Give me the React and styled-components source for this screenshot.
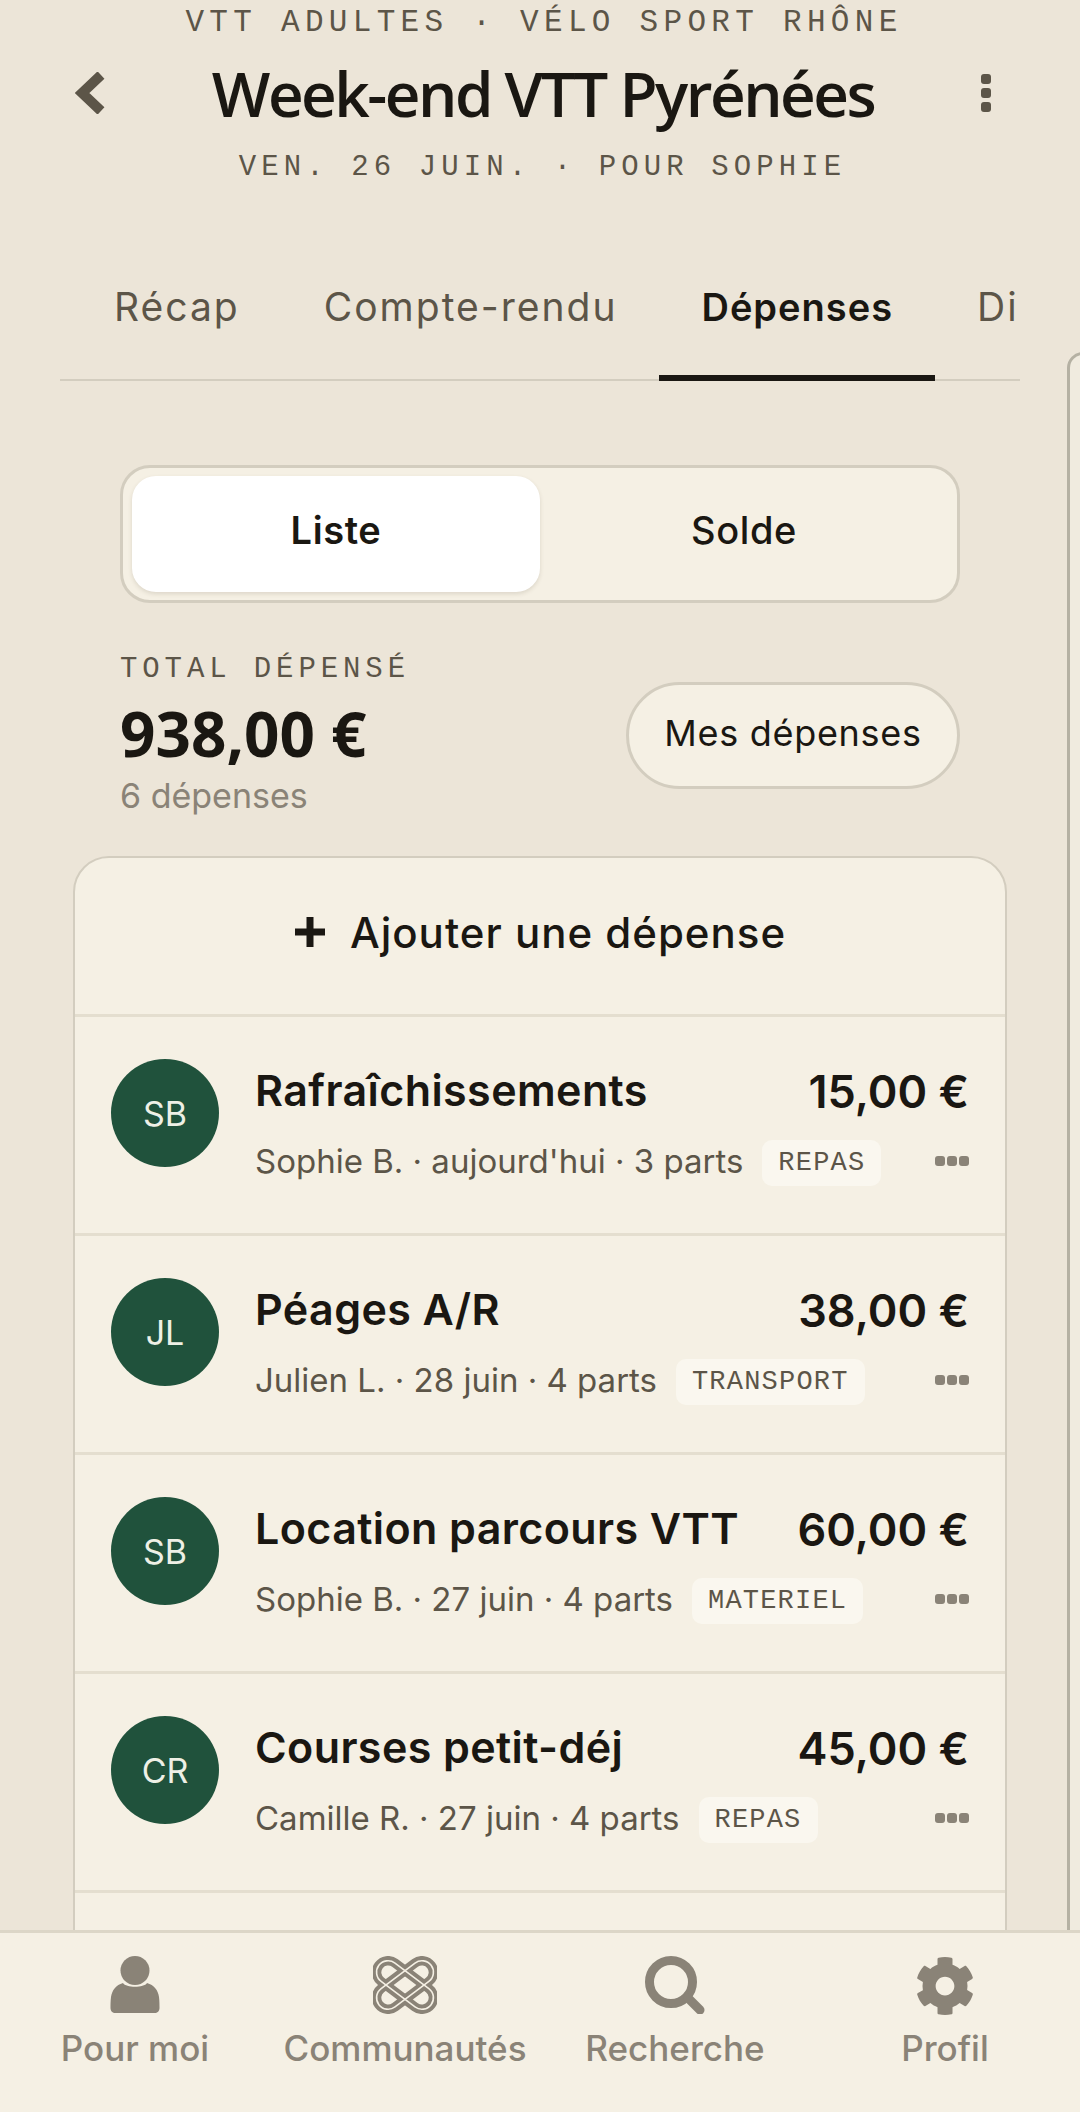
import React from 'react'
import styled, { createGlobalStyle } from 'styled-components'
import { FaCog } from 'react-icons/fa'

const GlobalStyle = createGlobalStyle`
	html, body {
		margin: 0;
		padding: 0;
		background: #ece5d8;
	}
`

const expenses = [
	{ initials: 'SB', title: 'Rafraîchissements', amount: '15,00 €', meta: "Sophie B. · aujourd'hui · 3 parts", tag: 'REPAS' },
	{ initials: 'JL', title: 'Péages A/R', amount: '38,00 €', meta: 'Julien L. · 28 juin · 4 parts', tag: 'TRANSPORT' },
	{ initials: 'SB', title: 'Location parcours VTT', amount: '60,00 €', meta: 'Sophie B. · 27 juin · 4 parts', tag: 'MATERIEL' },
	{ initials: 'CR', title: 'Courses petit-déj', amount: '45,00 €', meta: 'Camille R. · 27 juin · 4 parts', tag: 'REPAS' },
]

const PersonIcon = () => (
	<NavSvg viewBox="0 0 64 58">
		<circle cx="32" cy="14.500" r="14.500" />
		<path d="M20 27c3 5 21 5 24 0 7 2 11 7 12 14 .5 4 .5 8 .5 11 0 3-2 5-5 5H12.500c-3 0-5-2-5-5 0-3 0-7 .5-11 1-7 5-12 12-14z" />
	</NavSvg>
)

const KnotIcon = () => (
	<NavSvg viewBox="0 0 64 58">
		<g fill="none" stroke="#8a8377" strokeWidth="9.500">
			<rect x="-0.7" y="17.500" width="65.4" height="23" rx="11.500" transform="rotate(37 32 29)" />
			<rect x="-0.7" y="17.500" width="65.4" height="23" rx="11.500" transform="rotate(-37 32 29)" />
		</g>
		<g fill="none" stroke="#f5f0e4" strokeWidth="1.600">
			<rect x="-0.7" y="17.500" width="65.4" height="23" rx="11.500" transform="rotate(37 32 29)" />
			<rect x="-0.7" y="17.500" width="65.4" height="23" rx="11.500" transform="rotate(-37 32 29)" />
		</g>
	</NavSvg>
)

const SearchIcon = () => (
	<NavSvg viewBox="0 0 64 58">
		<circle cx="28" cy="26" r="21.500" fill="none" stroke="#8a8377" strokeWidth="9" />
		<path d="M45 42l12 12" fill="none" stroke="#8a8377" strokeWidth="9" strokeLinecap="round" />
	</NavSvg>
)

const App = () => (
	<Page>
		<GlobalStyle />
		<Header>
			<Overline>VTT ADULTES · VÉLO SPORT RHÔNE</Overline>
			<TitleRow>
				<BackIcon viewBox="0 0 30 42">
					<path d="M26 3L7 21l19 18" fill="none" stroke="#5c5548" strokeWidth="10" />
				</BackIcon>
				<Title>Week-end VTT Pyrénées</Title>
				<Kebab>
					<Dot />
					<Dot />
					<Dot />
				</Kebab>
			</TitleRow>
			<Subtitle>VEN. 26 JUIN. · POUR SOPHIE</Subtitle>
		</Header>

		<Tabs>
			<Tab>Récap</Tab>
			<Tab>Compte-rendu</Tab>
			<Tab $active>Dépenses</Tab>
			<Tab>Discussion</Tab>
		</Tabs>

		<Segmented>
			<Segment $active>Liste</Segment>
			<Segment>Solde</Segment>
		</Segmented>

		<Summary>
			<div>
				<TotalLabel>TOTAL DÉPENSÉ</TotalLabel>
				<TotalAmount>938,00 €</TotalAmount>
				<TotalCount>6 dépenses</TotalCount>
			</div>
			<MineButton>Mes dépenses</MineButton>
		</Summary>

		<Card>
			<AddRow>
				<PlusIcon viewBox="0 0 32 32">
					<path d="M16 1v30M1 16h30" stroke="#1a1712" strokeWidth="7" />
				</PlusIcon>
				Ajouter une dépense
			</AddRow>
			{expenses.map(item => (
				<ExpenseRow key={item.title}>
					<Avatar>{item.initials}</Avatar>
					<ExpenseBody>
						<ExpenseTop>
							<ExpenseTitle>{item.title}</ExpenseTitle>
							<ExpenseAmount>{item.amount}</ExpenseAmount>
						</ExpenseTop>
						<ExpenseBottom>
							<ExpenseMeta>{item.meta}</ExpenseMeta>
							<Tag>{item.tag}</Tag>
							<MoreDots>
								<SmallDot />
								<SmallDot />
								<SmallDot />
							</MoreDots>
						</ExpenseBottom>
					</ExpenseBody>
				</ExpenseRow>
			))}
			<ExpenseRow />
		</Card>

		<PeekCard />

		<BottomNav>
			<NavItem>
				<PersonIcon />
				<NavLabel>Pour moi</NavLabel>
			</NavItem>
			<NavItem>
				<KnotIcon />
				<NavLabel>Communautés</NavLabel>
			</NavItem>
			<NavItem>
				<SearchIcon />
				<NavLabel>Recherche</NavLabel>
			</NavItem>
			<NavItem>
				<GearIcon />
				<NavLabel>Profil</NavLabel>
			</NavItem>
		</BottomNav>
	</Page>
)

export default App

const sans = `'Inter', 'Noto Sans', sans-serif`
const mono = `'Liberation Mono', 'DejaVu Sans Mono', monospace`

const Page = styled.div`
	position: relative;
	width: 1080px;
	height: 2112px;
	overflow: hidden;
	background: #ece5d8;
	font-family: ${sans};
	color: #1a1712;
`
const Header = styled.header`
	display: flex;
	flex-direction: column;
	align-items: center;
	height: 230px;
	padding-top: 3px;
	box-sizing: border-box;
`
const Overline = styled.div`
	padding-left: 8px;
	font-family: ${mono};
	font-size: 31px;
	line-height: 40px;
	letter-spacing: 5.300px;
	color: #5c5548;
`
const TitleRow = styled.div`
	display: flex;
	align-items: center;
	justify-content: space-between;
	width: 962px;
	height: 70px;
	margin-top: 15px;
	padding: 0 30px 0 16px;
	box-sizing: border-box;
`
const BackIcon = styled.svg`
	width: 30px;
	height: 42px;
`
const Title = styled.h1`
	margin: 0;
	font-family: 'Open Sans', sans-serif;
	font-size: 62px;
	font-weight: 600;
	letter-spacing: -2.500px;
	line-height: 70px;
	color: #1a1712;
`
const Kebab = styled.div`
	display: flex;
	flex-direction: column;
	gap: 4px;
`
const Dot = styled.span`
	width: 10px;
	height: 10px;
	border-radius: 3px;
	background: #5c5548;
`
const Subtitle = styled.div`
	padding-left: 5px;
	font-family: ${mono};
	font-size: 29px;
	line-height: 38px;
	letter-spacing: 5.100px;
	color: #5c5548;
	margin-top: 21px;
`
const Tabs = styled.nav`
	display: flex;
	width: 960px;
	height: 151px;
	margin: 0 60px;
	padding: 0 0 0 12px;
	box-sizing: border-box;
	overflow: hidden;
	box-shadow: inset 0 -2px 0 #d3cdbf;
`
const Tab = styled.div`
	display: flex;
	align-items: center;
	flex: none;
	height: 151px;
	padding: 8px 42px 0;
	box-sizing: border-box;
	font-size: ${props => (props.$active ? 38 : 39)}px;
	letter-spacing: ${props => (props.$active ? 1 : 2)}px;
	font-weight: ${props => (props.$active ? 600 : 400)};
	color: ${props => (props.$active ? '#1a1712' : '#5c5548')};
	border-bottom: 6px solid ${props => (props.$active ? '#1a1712' : 'transparent')};
`
const Segmented = styled.div`
	display: grid;
	grid-template-columns: 1fr 1fr;
	width: 840px;
	height: 138px;
	margin: 84px 0 0 120px;
	padding: 8px 9px;
	box-sizing: border-box;
	background: #f5f0e4;
	border: 3px solid #d3cdbf;
	border-radius: 30px;
`
const Segment = styled.div`
	display: flex;
	align-items: center;
	justify-content: center;
	padding-bottom: 8px;
	font-size: 38px;
	letter-spacing: 0.600px;
	font-weight: ${props => (props.$active ? 600 : 500)};
	border-radius: 24px;
	background: ${props => (props.$active ? '#fff' : 'transparent')};
	box-shadow: ${props => (props.$active ? '0 2px 4px rgba(80, 70, 50, 0.15)' : 'none')};
`
const Summary = styled.section`
	display: flex;
	align-items: center;
	justify-content: space-between;
	width: 840px;
	margin: 50px 0 0 120px;
`
const TotalLabel = styled.div`
	font-family: ${mono};
	font-size: 29px;
	line-height: 34px;
	letter-spacing: 4.900px;
	color: #5c5548;
`
const TotalAmount = styled.div`
	font-family: 'Noto Sans', sans-serif;
	font-size: 62px;
	font-weight: 700;
	line-height: 68px;
	margin-top: 12px;
`
const TotalCount = styled.div`
	font-size: 34px;
	line-height: 42px;
	color: #8a8377;
	margin-top: 8px;
`
const MineButton = styled.div`
	display: flex;
	align-items: center;
	justify-content: center;
	width: 334px;
	height: 107px;
	padding-bottom: 4px;
	box-sizing: border-box;
	background: #f5f0e4;
	border: 3px solid #d3cdbf;
	border-radius: 54px;
	font-size: 36px;
	letter-spacing: 0.700px;
`
const Card = styled.section`
	width: 934px;
	margin: 39px 0 0 73px;
	box-sizing: border-box;
	background: #f5f0e4;
	border: 2px solid #d3cdbf;
	border-radius: 36px 36px 0 0;
`
const AddRow = styled.div`
	display: flex;
	align-items: center;
	justify-content: center;
	gap: 24px;
	height: 156px;
	padding-bottom: 8px;
	box-sizing: border-box;
	font-size: 42px;
	letter-spacing: 1px;
	font-weight: 500;
`
const PlusIcon = styled.svg`
	width: 32px;
	height: 32px;
`
const ExpenseRow = styled.div`
	display: flex;
	gap: 36px;
	height: 219px;
	padding: 42px 36px 0 36px;
	box-sizing: border-box;
	border-top: 3px solid #e4decf;
`
const Avatar = styled.div`
	display: flex;
	align-items: center;
	justify-content: center;
	flex: none;
	width: 108px;
	height: 108px;
	border-radius: 50%;
	background: #20523c;
	color: #eef0e6;
	font-size: 34px;
`
const ExpenseBody = styled.div`
	flex: 1;
	min-width: 0;
`
const ExpenseTop = styled.div`
	display: flex;
	align-items: center;
	justify-content: space-between;
	height: 62px;
`
const ExpenseTitle = styled.div`
	font-size: 43px;
	font-weight: 600;
	letter-spacing: 0.400px;
`
const ExpenseAmount = styled.div`
	padding-top: 3px;
	font-size: 45px;
	font-weight: 600;
`
const ExpenseBottom = styled.div`
	position: relative;
	display: flex;
	align-items: center;
	gap: 19px;
	height: 48px;
	margin-top: 16px;
`
const ExpenseMeta = styled.div`
	font-size: 33px;
	color: #5c5548;
	white-space: nowrap;
`
const Tag = styled.div`
	margin-top: 4px;
	font-family: ${mono};
	font-size: 27px;
	letter-spacing: 1.200px;
	line-height: 46px;
	padding: 0 16px;
	color: #5c5548;
	background: #faf7ef;
	border-radius: 10px;
`
const MoreDots = styled.div`
	position: absolute;
	right: 0;
	top: 19px;
	display: flex;
	gap: 2px;
`
const SmallDot = styled.span`
	width: 10px;
	height: 10px;
	border-radius: 3px;
	background: #8a8377;
`
const PeekCard = styled.div`
	position: absolute;
	top: 352px;
	left: 1067px;
	width: 60px;
	height: 1700px;
	box-sizing: border-box;
	background: #f0ebdf;
	border: 3px solid #b5b1a3;
	border-radius: 16px;
`
const BottomNav = styled.nav`
	position: absolute;
	left: 0;
	right: 0;
	bottom: 0;
	display: grid;
	grid-template-columns: 270px 270px 270px 270px;
	height: 182px;
	box-sizing: border-box;
	padding-top: 23px;
	background: #f5f0e4;
	border-top: 3px solid #dcd6c7;
`
const NavItem = styled.div`
	display: flex;
	flex-direction: column;
	align-items: center;
	gap: 12px;
`
const NavSvg = styled.svg`
	flex: none;
	width: 64px;
	height: 58px;
	fill: #8a8377;
`
const GearIcon = styled(FaCog)`
	flex: none;
	width: 60px;
	height: 60px;
	margin-bottom: -2px;
	color: #8a8377;
`
const NavLabel = styled.div`
	font-size: 35px;
	font-weight: 500;
	line-height: 44px;
	color: #8a8377;
`
